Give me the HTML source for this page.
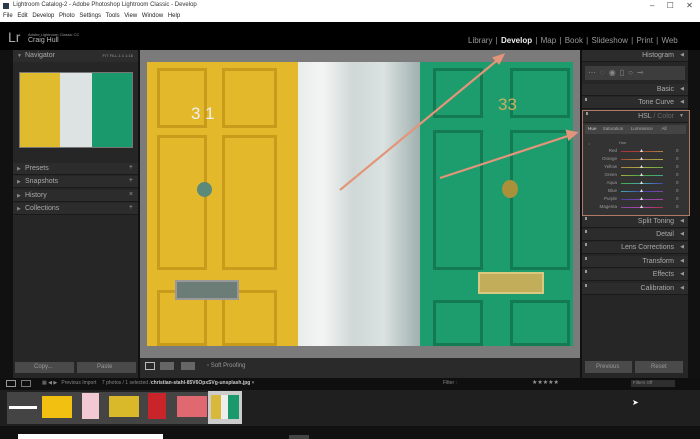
<!DOCTYPE html><html><head><style>
*{margin:0;padding:0;box-sizing:border-box}
body{width:700px;height:439px;overflow:hidden;background:#111;font-family:"Liberation Sans",sans-serif;position:relative}
div{position:absolute}
.t{color:#bbb;font-size:6px;white-space:nowrap}
.lh{left:13px;width:125px;height:12px;background:#2c2c2c;border-bottom:1px solid #1a1a1a}
.lh span{position:absolute;left:12px;top:2px;font-size:7px;color:#aaa}
.lh i{position:absolute;left:4px;top:3px;font-style:normal;font-size:5px;color:#888}
.lh b{position:absolute;right:5px;top:1px;font-size:7px;color:#999;font-weight:normal}
.rh{left:582px;width:106px;height:12px;background:#2c2c2c;border-bottom:1px solid #1a1a1a}
.rh span{position:absolute;right:14px;top:2px;font-size:7px;color:#aaa}
.rh b{position:absolute;right:4px;top:2px;font-size:5px;color:#999;font-weight:normal}
.rh i{position:absolute;left:3px;top:1px;width:2px;height:3px;background:#999}
.row>span{position:absolute;left:0;top:0;font-size:4.5px;color:#999;width:32px;text-align:right}
</style></head><body>
<div style="left:0;top:0;width:700px;height:22px;background:#fff"></div>
<div style="left:3px;top:3px;width:6px;height:6px;background:#2a3a4a"></div>
<div class="t" style="left:13px;top:2px;color:#333;font-size:6px">Lightroom Catalog-2 - Adobe Photoshop Lightroom Classic - Develop</div>
<div class="t" style="left:3px;top:13px;color:#222;font-size:6px;word-spacing:3px">File Edit Develop Photo Settings Tools View Window Help</div>
<div class="t" style="left:650px;top:1px;color:#444;font-size:8px;word-spacing:10px">– ☐ ✕</div>
<div style="left:0;top:22px;width:700px;height:28px;background:#000"></div>
<div class="t" style="left:8px;top:29px;font-size:14px;color:#aaa">Lr</div>
<div class="t" style="left:28px;top:32px;font-size:4px;color:#999">Adobe Lightroom Classic CC</div>
<div class="t" style="left:28px;top:37px;font-size:7px;color:#bbb">Craig Hull</div>
<div class="t" style="left:468px;top:36px;font-size:8px;color:#999;word-spacing:1px">Library&nbsp;|&nbsp;<b style="color:#eee">Develop</b>&nbsp;|&nbsp;Map&nbsp;|&nbsp;Book&nbsp;|&nbsp;Slideshow&nbsp;|&nbsp;Print&nbsp;|&nbsp;Web</div>
<!-- left panel -->
<div style="left:13px;top:50px;width:125px;height:308px;background:#262626"></div>
<div class="lh" style="top:50px;border:none"><i>▼</i><span>Navigator</span><b style="font-size:4px;top:3px">FIT FILL 1:1 1:16</b></div>
<div style="left:19px;top:72px;width:114px;height:76px;background:#555;border:1px solid #777">
<div style="left:0;top:0;width:40px;height:74px;background:#e0bb2e"></div>
<div style="left:40px;top:0;width:32px;height:74px;background:#dde3e3"></div>
<div style="left:72px;top:0;width:40px;height:74px;background:#1a9a6c"></div></div>
<div class="lh" style="top:163px"><i>▶</i><span>Presets</span><b>+</b></div>
<div class="lh" style="top:176px"><i>▶</i><span>Snapshots</span><b>+</b></div>
<div class="lh" style="top:190px"><i>▶</i><span>History</span><b>×</b></div>
<div class="lh" style="top:203px"><i>▶</i><span>Collections</span><b>+</b></div>
<div style="left:13px;top:358px;width:125px;height:20px;background:#262626"></div>
<div style="left:15px;top:362px;width:59px;height:11px;background:#4a4a4a"><div class="t" style="left:19px;top:2px;color:#999">Copy...</div></div>
<div style="left:77px;top:362px;width:59px;height:11px;background:#4a4a4a"><div class="t" style="left:20px;top:2px;color:#999">Paste</div></div>
<!-- center -->
<div style="left:140px;top:50px;width:440px;height:308px;background:#7b7b7b"></div>
<div style="left:147px;top:62px;width:151px;height:284px;background:#e4b82b"></div>
<div style="left:157px;top:68px;width:50px;height:60px;border:3px solid #c99b1c"></div>
<div style="left:222px;top:68px;width:55px;height:60px;border:3px solid #c99b1c"></div>
<div style="left:157px;top:135px;width:50px;height:135px;border:3px solid #c99b1c"></div>
<div style="left:222px;top:135px;width:55px;height:135px;border:3px solid #c99b1c"></div>
<div style="left:157px;top:290px;width:50px;height:56px;border:3px solid #c99b1c"></div>
<div style="left:222px;top:290px;width:55px;height:56px;border:3px solid #c99b1c"></div>
<div class="t" style="left:191px;top:104px;font-size:17px;color:#eee">3 1</div>
<div style="left:197px;top:182px;width:15px;height:15px;border-radius:50%;background:#5c8a7a"></div>
<div style="left:175px;top:280px;width:64px;height:20px;background:#6b7d76;border:2px solid #999"></div>
<div style="left:298px;top:62px;width:122px;height:284px;background:linear-gradient(90deg,#e8eceb,#f3f5f4 20%,#cfd8d7 45%,#dbe2e1 70%,#9fb0ae 100%)"></div>
<div style="left:420px;top:62px;width:153px;height:284px;background:#1d9c6e"></div>
<div style="left:433px;top:68px;width:50px;height:50px;border:3px solid #137a54"></div>
<div style="left:510px;top:68px;width:60px;height:50px;border:3px solid #137a54"></div>
<div style="left:433px;top:130px;width:50px;height:140px;border:3px solid #137a54"></div>
<div style="left:510px;top:130px;width:60px;height:140px;border:3px solid #137a54"></div>
<div style="left:433px;top:300px;width:50px;height:46px;border:3px solid #137a54"></div>
<div style="left:510px;top:300px;width:60px;height:46px;border:3px solid #137a54"></div>
<div class="t" style="left:498px;top:95px;font-size:17px;color:#c8b060">33</div>
<div style="left:502px;top:180px;width:16px;height:18px;border-radius:50%;background:#a8913a"></div>
<div style="left:478px;top:272px;width:66px;height:22px;background:#c2ad5a;border:2px solid #d8c880"></div>
<svg style="position:absolute;left:0;top:0" width="700" height="439"><g stroke="#e3957a" stroke-width="2.2" fill="#e3957a"><line x1="340" y1="190" x2="500" y2="58"/><polygon points="503,55 494,58 499,63"/><line x1="440" y1="178" x2="571" y2="135"/><polygon points="576,133 567,131 569,139"/></g></svg>
<div style="left:140px;top:358px;width:440px;height:20px;background:#2a2a2a"></div>
<div style="left:145px;top:362px;width:10px;height:8px;border:1px solid #bbb"></div>
<div style="left:160px;top:362px;width:14px;height:8px;background:#666"></div>
<div style="left:181px;top:362px;width:14px;height:8px;background:#666"></div>
<div class="t" style="left:207px;top:363px;color:#999">▫ Soft Proofing</div>
<!-- right -->
<div style="left:582px;top:50px;width:106px;height:308px;background:#262626"></div>
<div class="rh" style="top:50px"><span>Histogram</span><b>◀</b></div>
<div style="left:585px;top:66px;width:100px;height:14px;background:#3d3d3d"><div class="t" style="left:3px;top:2px;color:#888;font-size:8px;letter-spacing:4px">⋯◌◉▯○⊸</div></div>
<div class="rh" style="top:84px"><span>Basic</span><b>◀</b></div>
<div class="rh" style="top:97px"><i></i><span>Tone Curve</span><b>◀</b></div>
<div style="left:582px;top:110px;width:108px;height:106px;background:#333;border:1.5px solid #b07a66"></div>
<div class="rh" style="top:111px;left:583px;width:105px"><i></i><span>HSL <span style="position:static;color:#666">/ Color</span></span><b>▼</b></div>
<div style="left:585px;top:125px;width:101px;height:9px;background:#444"><div class="t" style="left:3px;top:1px;font-size:4.5px;color:#aaa"><b>Hue</b>&nbsp;&nbsp;&nbsp;&nbsp;&nbsp;Saturation&nbsp;&nbsp;&nbsp;&nbsp;&nbsp;&nbsp;Luminance&nbsp;&nbsp;&nbsp;&nbsp;&nbsp;&nbsp;&nbsp;All</div></div>
<div class="t" style="left:588px;top:141px;font-size:4px;color:#888">○</div>
<div class="t" style="left:619px;top:140px;font-size:4px;color:#999">Hue</div>
<div style="left:585px;top:148px;width:100px;height:64px">
<div class="row" style="top:0;width:100px;height:8px"><span>Red</span><div style="left:36px;top:3px;width:42px;height:1px;background:linear-gradient(90deg,#a34,#a43,#a84)"></div><div class="t" style="left:55px;top:-1px;color:#ddd">▴</div><div class="t" style="left:91px;top:0;font-size:4.5px;color:#999">0</div></div>
<div class="row" style="top:8px;width:100px;height:8px"><span>Orange</span><div style="left:36px;top:3px;width:42px;height:1px;background:linear-gradient(90deg,#a43,#a84,#aa4)"></div><div class="t" style="left:55px;top:-1px;color:#ddd">▴</div><div class="t" style="left:91px;top:0;font-size:4.5px;color:#999">0</div></div>
<div class="row" style="top:16px;width:100px;height:8px"><span>Yellow</span><div style="left:36px;top:3px;width:42px;height:1px;background:linear-gradient(90deg,#a84,#aa4,#6a4)"></div><div class="t" style="left:55px;top:-1px;color:#ddd">▴</div><div class="t" style="left:91px;top:0;font-size:4.5px;color:#999">0</div></div>
<div class="row" style="top:24px;width:100px;height:8px"><span>Green</span><div style="left:36px;top:3px;width:42px;height:1px;background:linear-gradient(90deg,#aa4,#4a4,#4a8)"></div><div class="t" style="left:55px;top:-1px;color:#ddd">▴</div><div class="t" style="left:91px;top:0;font-size:4.5px;color:#999">0</div></div>
<div class="row" style="top:32px;width:100px;height:8px"><span>Aqua</span><div style="left:36px;top:3px;width:42px;height:1px;background:linear-gradient(90deg,#4a4,#4aa,#44a)"></div><div class="t" style="left:55px;top:-1px;color:#ddd">▴</div><div class="t" style="left:91px;top:0;font-size:4.5px;color:#999">0</div></div>
<div class="row" style="top:40px;width:100px;height:8px"><span>Blue</span><div style="left:36px;top:3px;width:42px;height:1px;background:linear-gradient(90deg,#4aa,#44a,#84a)"></div><div class="t" style="left:55px;top:-1px;color:#ddd">▴</div><div class="t" style="left:91px;top:0;font-size:4.5px;color:#999">0</div></div>
<div class="row" style="top:48px;width:100px;height:8px"><span>Purple</span><div style="left:36px;top:3px;width:42px;height:1px;background:linear-gradient(90deg,#44a,#84a,#a4a)"></div><div class="t" style="left:55px;top:-1px;color:#ddd">▴</div><div class="t" style="left:91px;top:0;font-size:4.5px;color:#999">0</div></div>
<div class="row" style="top:56px;width:100px;height:8px"><span>Magenta</span><div style="left:36px;top:3px;width:42px;height:1px;background:linear-gradient(90deg,#84a,#a4a,#a34)"></div><div class="t" style="left:55px;top:-1px;color:#ddd">▴</div><div class="t" style="left:91px;top:0;font-size:4.5px;color:#999">0</div></div>
</div>
<div class="rh" style="top:216px"><i></i><span>Split Toning</span><b>◀</b></div>
<div class="rh" style="top:229px"><i></i><span>Detail</span><b>◀</b></div>
<div class="rh" style="top:242px"><i></i><span>Lens Corrections</span><b>◀</b></div>
<div class="rh" style="top:256px"><i></i><span>Transform</span><b>◀</b></div>
<div class="rh" style="top:269px"><i></i><span>Effects</span><b>◀</b></div>
<div class="rh" style="top:283px"><i></i><span>Calibration</span><b>◀</b></div>
<div style="left:582px;top:358px;width:106px;height:20px;background:#262626"></div>
<div style="left:585px;top:361px;width:47px;height:12px;background:#4a4a4a"><div class="t" style="left:11px;top:3px;color:#999">Previous</div></div>
<div style="left:635px;top:361px;width:48px;height:12px;background:#4a4a4a"><div class="t" style="left:16px;top:3px;color:#999">Reset</div></div>
<!-- filmstrip -->
<div style="left:0;top:378px;width:700px;height:12px;background:#0f0f0f"></div>
<div style="left:6px;top:380px;width:10px;height:7px;border:1px solid #999"></div>
<div style="left:21px;top:380px;width:10px;height:7px;border:1px solid #777"></div>
<div class="t" style="left:42px;top:380px;color:#888;font-size:5px">▦ ◀ ▶&nbsp;&nbsp; Previous Import&nbsp;&nbsp;&nbsp; 7 photos / 1 selected /<b style="color:#ccc">christian-stahl-85V6OpxSVg-unsplash.jpg</b> ▾</div>
<div class="t" style="left:443px;top:380px;color:#888;font-size:5px">Filter :</div>
<div class="t" style="left:532px;top:379px;color:#999;font-size:6px">★★★★★</div>
<div style="left:631px;top:380px;width:44px;height:7px;background:#2e2e2e"><div class="t" style="left:2px;top:0;color:#888;font-size:4.5px">Filters Off</div></div>
<div style="left:0;top:390px;width:700px;height:36px;background:#1f1f1f"></div>
<div style="left:7px;top:392px;width:235px;height:32px;background:#444"></div>
<div style="left:9px;top:406px;width:28px;height:3px;background:#fff"></div>
<div style="left:42px;top:396px;width:30px;height:22px;background:#f2c010"></div>
<div style="left:82px;top:393px;width:17px;height:26px;background:#f2c8d2"></div>
<div style="left:109px;top:396px;width:30px;height:21px;background:#d9b82a"></div>
<div style="left:148px;top:393px;width:18px;height:26px;background:#c8242a"></div>
<div style="left:177px;top:396px;width:30px;height:21px;background:#e06870"></div>
<div style="left:208px;top:391px;width:34px;height:33px;background:#ccc"></div>
<div style="left:211px;top:395px;width:10px;height:24px;background:#d8b83a"></div>
<div style="left:221px;top:395px;width:7px;height:24px;background:#eee"></div>
<div style="left:228px;top:395px;width:11px;height:24px;background:#1a9a6c"></div>
<div class="t" style="left:632px;top:398px;color:#fff;font-size:8px">➤</div>
<div style="left:0;top:426px;width:700px;height:13px;background:#111"></div>
<div style="left:18px;top:434px;width:145px;height:5px;background:#fff"></div>
<div style="left:289px;top:435px;width:20px;height:4px;background:#444"></div>
</body></html>
